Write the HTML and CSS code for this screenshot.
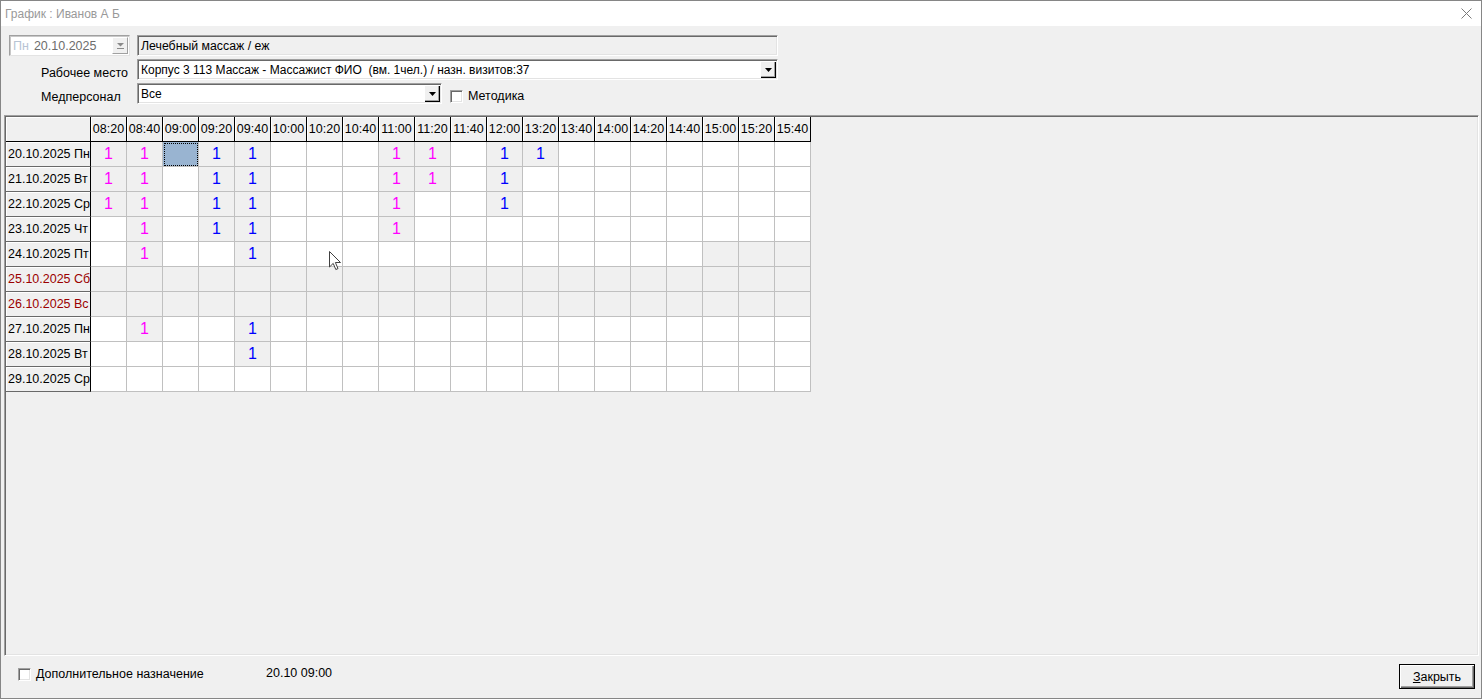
FILE: index.html
```html
<!DOCTYPE html>
<html lang="ru">
<head>
    <meta charset="UTF-8">
    <title>График : Иванов А Б</title>
    <link rel="stylesheet" href="styles.css">
</head>
<body>
<div class="window">
    <div class="titlebar">
        <span class="title">График : Иванов А Б</span>
        <svg class="close" width="11" height="11" viewBox="0 0 11 11"><path d="M0.5 0.5 L10.5 10.5 M10.5 0.5 L0.5 10.5" stroke="#7a7a7a" stroke-width="1" fill="none"/></svg>
    </div>

    <div class="form">
        <div class="datepick">
            <span class="dow">Пн</span>
            <span class="date">20.10.2025</span>
            <span class="dp-btn">
                <svg width="7" height="6" viewBox="0 0 7 6"><path d="M0 0 H7 L3.5 3.5 Z" fill="#8a8a8a"/><path d="M0 5.5 H7" stroke="#8a8a8a"/></svg>
            </span>
        </div>
        <div class="field ro wide">Лечебный массаж / еж</div>

        <div class="label">Рабочее место</div>
        <div class="field combo wide">
            <span class="val">Корпус 3 113 Массаж - Массажист ФИО &nbsp;(вм. 1чел.) / назн. визитов:37</span>
            <span class="drop"><svg width="7" height="4" viewBox="0 0 7 4"><path d="M0 0 H7 L3.5 4 Z" fill="#000"/></svg></span>
        </div>

        <div class="label">Медперсонал</div>
        <div class="field combo">
            <span class="val">Все</span>
            <span class="drop"><svg width="7" height="4" viewBox="0 0 7 4"><path d="M0 0 H7 L3.5 4 Z" fill="#000"/></svg></span>
        </div>
        <label class="check"><span class="chk"></span>Методика</label>
    </div>

    <div class="panel">
        <div class="grid">
            <div class="hd corner"></div>
            <div class="hd">08:20</div><div class="hd">08:40</div><div class="hd">09:00</div><div class="hd">09:20</div><div class="hd">09:40</div>
            <div class="hd">10:00</div><div class="hd">10:20</div><div class="hd">10:40</div><div class="hd">11:00</div><div class="hd">11:20</div>
            <div class="hd">11:40</div><div class="hd">12:00</div><div class="hd">13:20</div><div class="hd">13:40</div><div class="hd">14:00</div>
            <div class="hd">14:20</div><div class="hd">14:40</div><div class="hd">15:00</div><div class="hd">15:20</div><div class="hd">15:40</div>

            <!-- 20.10 -->
            <div class="rh">20.10.2025 Пн</div>
            <div class="c g m">1</div><div class="c g m">1</div><div class="c sel"></div><div class="c g b">1</div><div class="c g b">1</div>
            <div class="c"></div><div class="c"></div><div class="c"></div><div class="c g m">1</div><div class="c g m">1</div>
            <div class="c"></div><div class="c g b">1</div><div class="c g b">1</div><div class="c"></div><div class="c"></div>
            <div class="c"></div><div class="c"></div><div class="c"></div><div class="c"></div><div class="c"></div>

            <!-- 21.10 -->
            <div class="rh">21.10.2025 Вт</div>
            <div class="c g m">1</div><div class="c g m">1</div><div class="c"></div><div class="c g b">1</div><div class="c g b">1</div>
            <div class="c"></div><div class="c"></div><div class="c"></div><div class="c g m">1</div><div class="c g m">1</div>
            <div class="c"></div><div class="c g b">1</div><div class="c"></div><div class="c"></div><div class="c"></div>
            <div class="c"></div><div class="c"></div><div class="c"></div><div class="c"></div><div class="c"></div>

            <!-- 22.10 -->
            <div class="rh">22.10.2025 Ср</div>
            <div class="c g m">1</div><div class="c g m">1</div><div class="c"></div><div class="c g b">1</div><div class="c g b">1</div>
            <div class="c"></div><div class="c"></div><div class="c"></div><div class="c g m">1</div><div class="c"></div>
            <div class="c"></div><div class="c g b">1</div><div class="c"></div><div class="c"></div><div class="c"></div>
            <div class="c"></div><div class="c"></div><div class="c"></div><div class="c"></div><div class="c"></div>

            <!-- 23.10 -->
            <div class="rh">23.10.2025 Чт</div>
            <div class="c"></div><div class="c g m">1</div><div class="c"></div><div class="c g b">1</div><div class="c g b">1</div>
            <div class="c"></div><div class="c"></div><div class="c"></div><div class="c g m">1</div><div class="c"></div>
            <div class="c"></div><div class="c"></div><div class="c"></div><div class="c"></div><div class="c"></div>
            <div class="c"></div><div class="c"></div><div class="c"></div><div class="c"></div><div class="c"></div>

            <!-- 24.10 -->
            <div class="rh">24.10.2025 Пт</div>
            <div class="c"></div><div class="c g m">1</div><div class="c"></div><div class="c"></div><div class="c g b">1</div>
            <div class="c"></div><div class="c"></div><div class="c"></div><div class="c"></div><div class="c"></div>
            <div class="c"></div><div class="c"></div><div class="c"></div><div class="c"></div><div class="c"></div>
            <div class="c"></div><div class="c"></div><div class="c g"></div><div class="c g"></div><div class="c g"></div>

            <!-- 25.10 -->
            <div class="rh we">25.10.2025 Сб</div>
            <div class="c g"></div><div class="c g"></div><div class="c g"></div><div class="c g"></div><div class="c g"></div>
            <div class="c g"></div><div class="c g"></div><div class="c g"></div><div class="c g"></div><div class="c g"></div>
            <div class="c g"></div><div class="c g"></div><div class="c g"></div><div class="c g"></div><div class="c g"></div>
            <div class="c g"></div><div class="c g"></div><div class="c g"></div><div class="c g"></div><div class="c g"></div>

            <!-- 26.10 -->
            <div class="rh we">26.10.2025 Вс</div>
            <div class="c g"></div><div class="c g"></div><div class="c g"></div><div class="c g"></div><div class="c g"></div>
            <div class="c g"></div><div class="c g"></div><div class="c g"></div><div class="c g"></div><div class="c g"></div>
            <div class="c g"></div><div class="c g"></div><div class="c g"></div><div class="c g"></div><div class="c g"></div>
            <div class="c g"></div><div class="c g"></div><div class="c g"></div><div class="c g"></div><div class="c g"></div>

            <!-- 27.10 -->
            <div class="rh">27.10.2025 Пн</div>
            <div class="c"></div><div class="c g m">1</div><div class="c"></div><div class="c"></div><div class="c g b">1</div>
            <div class="c"></div><div class="c"></div><div class="c"></div><div class="c"></div><div class="c"></div>
            <div class="c"></div><div class="c"></div><div class="c"></div><div class="c"></div><div class="c"></div>
            <div class="c"></div><div class="c"></div><div class="c"></div><div class="c"></div><div class="c"></div>

            <!-- 28.10 -->
            <div class="rh">28.10.2025 Вт</div>
            <div class="c"></div><div class="c"></div><div class="c"></div><div class="c"></div><div class="c g b">1</div>
            <div class="c"></div><div class="c"></div><div class="c"></div><div class="c"></div><div class="c"></div>
            <div class="c"></div><div class="c"></div><div class="c"></div><div class="c"></div><div class="c"></div>
            <div class="c"></div><div class="c"></div><div class="c"></div><div class="c"></div><div class="c"></div>

            <!-- 29.10 -->
            <div class="rh">29.10.2025 Ср</div>
            <div class="c"></div><div class="c"></div><div class="c"></div><div class="c"></div><div class="c"></div>
            <div class="c"></div><div class="c"></div><div class="c"></div><div class="c"></div><div class="c"></div>
            <div class="c"></div><div class="c"></div><div class="c"></div><div class="c"></div><div class="c"></div>
            <div class="c"></div><div class="c"></div><div class="c"></div><div class="c"></div><div class="c"></div>

            <svg class="cursor" width="13" height="20" viewBox="0 0 13 20"><path d="M0.5 0.5 V16 L4.2 12.4 L6.8 18.5 L9 17.6 L6.4 11.5 H11.5 Z" fill="#fff" stroke="#404040" stroke-width="1"/></svg>
        </div>
    </div>

    <div class="bottombar">
        <label class="check extra"><span class="chk"></span>Дополнительное назначение</label>
        <span class="curtime">20.10 09:00</span>
        <button class="btn"><u>З</u>акрыть</button>
    </div>
</div>
</body>
</html>
```

FILE: styles.css
```css
*{ margin: 0; padding: 0; box-sizing: border-box;}
body{ font-family: "Liberation Sans", Arial, sans-serif; font-size: 12.5px; color: #000; background: #f0f0f0; overflow: hidden;}

.window{ width: 1482px; height: 699px; border: 1px solid #868686; display: flex; flex-direction: column; background: #f0f0f0;}

.titlebar{ height: 25px; flex: none; background: #fff; display: flex; align-items: center; justify-content: space-between; padding: 0 9px 0 4px; color: #999;}
.title{ font-size: 12px;}

/* top form */
.form{ flex: none; display: grid; grid-template-columns: 128px 305px 336px; grid-auto-rows: 21px; row-gap: 3px; padding: 9px 0 0 8px; width: 777px;}
.label{ padding-left: 32px; align-self: end; line-height: 13px;}
.wide{ grid-column: 2 / 4;}

.datepick{ width: 121px; display: flex; align-items: center; background: #fff; border: 1px solid; border-color: #a0a0a0 #e3e3e3 #e3e3e3 #a0a0a0; box-shadow: inset 1px 1px #c8c8c8; padding-left: 3px; color: #6d6d6d; font-size: 12.5px;}
.dow{ color: #b7c4d4; margin-right: 5px;}
.date{ flex: 1;}
.dp-btn{ width: 16px; height: 17px; margin-right: 1px; background: #f0f0f0; border: 1px solid; border-color: #fff #a0a0a0 #a0a0a0 #fff; display: flex; align-items: center; justify-content: center;}

.field{ font-size: 12px; border: 1px solid; border-color: #a0a0a0 #fff #fff #a0a0a0; box-shadow: inset 1px 1px #696969, inset -1px -1px #e3e3e3; background: #fff; display: flex; align-items: center; padding-left: 3px;}
.field.ro{ background: #f0f0f0; font-size: 12.3px;}
.combo .val{ flex: 1; white-space: nowrap; overflow: hidden;}
.drop{ width: 16px; height: 17px; margin-right: 1px; background: #f0f0f0; box-shadow: inset 1px 1px #fff, inset -1px -1px #000, inset -2px -2px #a0a0a0; display: flex; align-items: center; justify-content: center;}

.check{ display: flex; align-items: center; gap: 5px;}
.form .check{ padding-left: 8px; align-self: end; margin-bottom: 1px;}
.chk{ width: 13px; height: 13px; flex: none; background: #fff; border: 1px solid; border-color: #a0a0a0 #fff #fff #a0a0a0; box-shadow: inset 1px 1px #696969, inset -1px -1px #e3e3e3;}

/* schedule panel */
.panel{ flex: 1; margin: 11px 2px 0 3px; padding: 1px; border: 1px solid; border-color: #a0a0a0 #fff #fff #a0a0a0; box-shadow: inset 1px 1px #696969, inset -1px -1px #e3e3e3;}
.grid{ position: relative; display: grid; grid-template-columns: 85px repeat(20, 36px); grid-auto-rows: 25px; width: 805px;}

.hd{ background: #f0f0f0; border-right: 1px solid #000; border-bottom: 1px solid #000; box-shadow: inset 1px 1px #fff; text-align: center; line-height: 24px;}
.rh{ background: #f0f0f0; border-right: 1px solid #000; border-bottom: 1px solid #696969; box-shadow: inset 1px 1px #fff; padding-left: 2px; line-height: 24px; white-space: nowrap; overflow: hidden;}
.rh.we{ color: #9b0000;}

.c{ background: #fff; border-right: 1px solid #c0c0c0; border-bottom: 1px solid #c0c0c0; text-align: center; font-size: 16px; line-height: 24px;}
.c.g{ background: #f0f0f0;}
.c.m{ color: #ff00ff;}
.c.b{ color: #0000ff;}
.c.sel{ background: #99b4d1; outline: 1px dotted #000; outline-offset: -2px;}

.cursor{ position: absolute; left: 323px; top: 134px;}

/* bottom */
.bottombar{ flex: none; height: 42px; display: flex; align-items: flex-start; padding-left: 17px;}
.check.extra{ width: 248px; margin-top: 11px;}
.curtime{ margin-top: 11px; line-height: 13px;}
.btn{ margin-left: auto; margin-right: 6px; margin-top: 8px; width: 76px; height: 25px; font: inherit; color: #000; background: #f0f0f0; border: 1px solid #000; box-shadow: inset 1px 1px #fff, inset -1px -1px #696969, inset -2px -2px #a0a0a0;}
.btn u{ text-decoration: underline;}
```
